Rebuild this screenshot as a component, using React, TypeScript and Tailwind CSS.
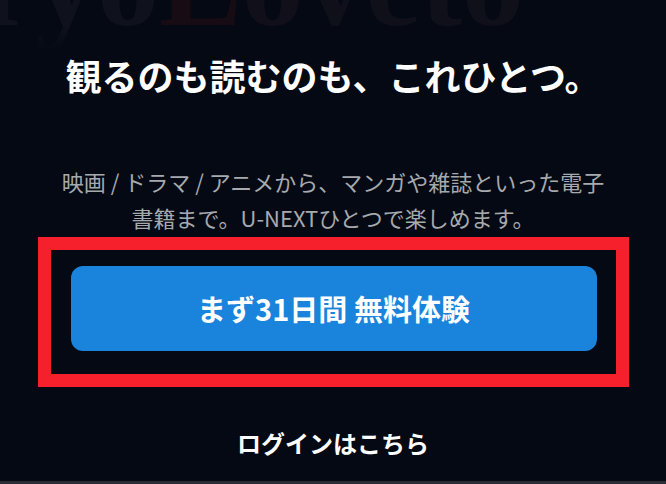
export default function App() {
  return (
    <div
      className="relative w-[666px] h-[484px] overflow-hidden bg-[#040914] flex flex-col items-center"
      style={{ fontFamily: '"Noto Sans CJK JP", "Noto Sans", sans-serif' }}
    >
      {/* faded poster title behind the header */}
      <div className="absolute inset-x-0 top-0 h-[50px] overflow-hidden pointer-events-none">
        <div
          className="absolute left-[-20px] top-[-78px] whitespace-nowrap text-[124px] font-bold leading-none"
          style={{ fontFamily: '"Liberation Serif", serif' }}
        >
          <span className="text-[#0f121c]">ryo</span>
          <span className="text-[#170b14]">L</span>
          <span className="text-[#110f1a]">o</span>
          <span className="text-[#0f101a]">veto</span>
        </div>
        <div className="absolute inset-0 bg-gradient-to-b from-transparent via-transparent to-[#040914]" />
      </div>

      <h1 className="relative mt-[57px] text-[36px] leading-[36px] font-bold text-white">
        観るのも読むのも、これひとつ。
      </h1>

      <p className="mt-[70px] text-center text-[22px] leading-[36px] text-[#a6a9ae]">
        映画 / ドラマ / アニメから、マンガや雑誌といった電子
        <br />
        書籍まで。U-NEXTひとつで楽しめます。
      </p>

      <div className="mt-[2px] w-[591px] h-[150px] border-[13px] border-[#f5202b] pt-[16px] pl-[20px] pr-[19px]">
        <button className="w-[526px] h-[85px] rounded-[12px] bg-[#1a83db] text-white text-[29px] font-bold flex items-center justify-center">
          まず31日間 無料体験
        </button>
      </div>

      <div className="mt-[44px] text-[24px] leading-[24px] font-bold text-white">
        ログインはこちら
      </div>

      <div className="mt-auto w-full h-[3px] bg-[#2a2d34]" />
    </div>
  );
}
